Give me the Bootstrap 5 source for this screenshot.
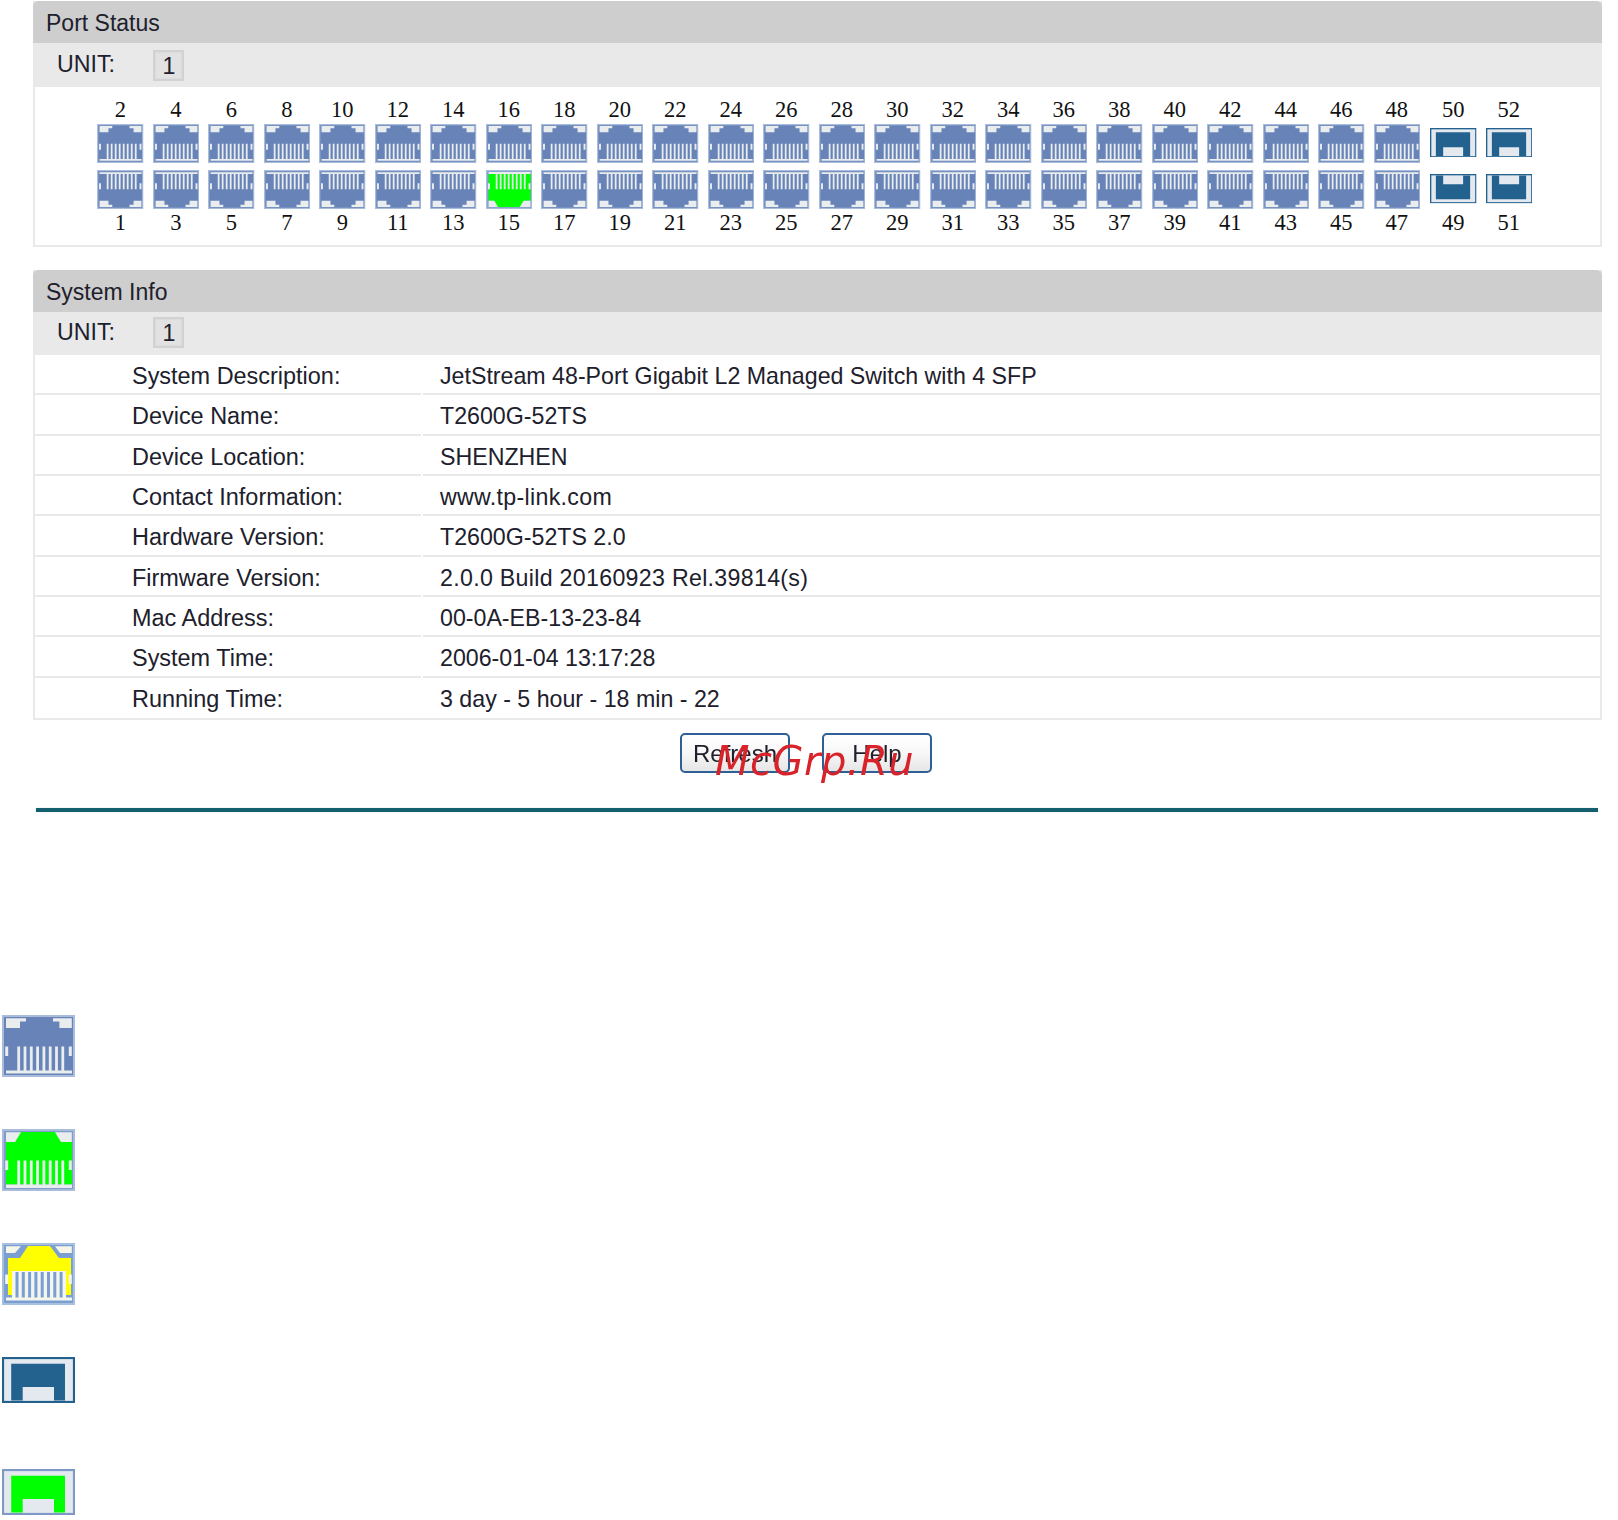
<!DOCTYPE html>
<html lang="en">
<head>
<meta charset="utf-8">
<title>Port Status</title>
<link href="https://cdn.jsdelivr.net/npm/bootstrap@5.3.0/dist/css/bootstrap.min.css" rel="stylesheet">
<style>
html,body{background:#fff;}
body{margin:0;padding-top:1px;font-family:"Liberation Sans",Arial,sans-serif;font-size:23.2px;color:#20202c;}
.sheet{filter:blur(.45px);}
.swpanel{margin-left:33px;width:1569px;border:2px solid #e9e9e9;border-top:0;border-radius:0;background:#fff;}
.swtitle{height:42px;line-height:45px;background:#cecece;margin:0 -2px;padding:0 0 0 13px;border:0;border-radius:0;font-size:23px;}
.swunit{height:44px;background:#e9e9e9;margin:0 -2px;padding-left:24px;}
.infopanel .swunit{height:46px;padding-bottom:2px;}
.swunit-label{width:96px;margin-top:-1px;}
.swunit-box{width:31px;height:31px;margin-top:1px;background:#e2e2e2;border:2px solid #d2d2d2;line-height:29px;text-align:center;box-shadow:inset 0 0 2px #cfcfcf;padding-left:1px;}
.portpanel{height:246px;margin-bottom:23px;}
.infopanel{height:450px;}
.ports{padding:10px 0 0 57.5px;}
.pcol{width:55.5px;flex:none;}
.pcol-gap{margin-left:1px;}
.pnum{font-family:"Liberation Serif","Times New Roman",serif;font-size:22.5px;line-height:26px;height:27px;color:#111;}
.pslot{height:39px;width:46.5px;}
.pslot+.pslot{margin-top:7px;}
.pslot svg{display:block;}
.pnum-low{height:26px;line-height:28px;}
.ico-rj{width:46.5px;height:39px;}
.ico-sfp{width:46.5px;height:29.5px;margin-top:-2px;}
.flipy{transform:scaleY(-1);}
.inforow{height:40.35px;line-height:41px;}
.inforow .kcell{width:386px;padding:1px 0 0 97px;margin-right:2px;border-bottom:2px solid #e9e9e9;height:100%;font-size:23.45px;}
.inforow .vcell{flex:1;padding:1px 0 0 17px;border-bottom:2px solid #e9e9e9;height:100%;}
.inforow .vwide{letter-spacing:.3px;}
.inforow:last-child .kcell,.inforow:last-child .vcell{border-bottom:0;}
.actions{margin-top:13px;height:40px;gap:32px;padding-left:680px;}
.swbtn{width:110px;height:40px;padding:2px 0 0;font-size:24px;line-height:34px;color:#20202c;border:2px solid #2e6096;border-radius:5px;background:linear-gradient(#fff,#f7f7f7 50%,#e6e6e6);}
.stamp{position:absolute;left:715px;top:736px;font-family:"DejaVu Sans",sans-serif;font-style:italic;font-size:40px;letter-spacing:.5px;line-height:50px;color:#d8232a;white-space:nowrap;}
.swrule{margin:35px 0 0 36px;width:1562px;height:4px;background:#135f6e;box-shadow:0 0 1px #8fb6bd;}
.legend{margin-top:203px;padding-left:2px;}
.legrow{height:114px;}
.legrow svg{display:block;margin-top:0;}
.legrow-last{height:46px;margin-top:-2px;}
.leg-rj{width:73px;height:62px;}
.leg-sfp{width:73px;height:46px;}
</style>
</head>
<body>
<svg width="0" height="0" class="position-absolute">
  <defs>
    <g id="rjmarks">
      <path fill="#e9edee" d="M4 3.2H24V6.6H18V13H4zM69.8 3.2H51V6.6H57.4V13H69.8z"/>
      <path fill="#e9edee" d="M3.2 31.5H6.2V41H3.2zM66.8 31.5H69.8V41H66.8z"/>
      <path fill="#e9edee" d="M15.3 31.5h2.8V56h-2.8zM21.6 31.5h2.8V56h-2.8zM27.9 31.5h2.8V56h-2.8zM34.2 31.5h2.8V56h-2.8zM40.5 31.5h2.8V56h-2.8zM46.8 31.5h2.8V56h-2.8zM53.1 31.5h2.8V56h-2.8zM59.4 31.5h2.8V56h-2.8z"/>
      <path fill="#e9edee" d="M4 55.6H70V58.4H4z"/>
    </g>
    <symbol id="rjblue" viewBox="0 0 73 62" preserveAspectRatio="none">
      <rect x="1" y="1" width="71" height="60" fill="#6783b8" stroke="#a9bcdc" stroke-width="2"/>
      <use href="#rjmarks"/>
    </symbol>
    <symbol id="rjgreen" viewBox="0 0 73 62" preserveAspectRatio="none">
      <rect x="1" y="1" width="71" height="60" fill="#7f9bc9" stroke="#a9bcdc" stroke-width="2"/>
      <path fill="#00ff00" d="M18 3H54L60 13H70V55.6H4V13H13z"/>
      <path fill="#e9edee" d="M4 3.2H19L13 13H4zM69.8 3.2H53L59 13H69.8z"/>
      <path fill="#e9edee" d="M3.2 31.5H6.2V41H3.2zM66.8 31.5H69.8V41H66.8z"/>
      <path fill="#e9edee" d="M15.3 31.5h2.8V56h-2.8zM21.6 31.5h2.8V56h-2.8zM27.9 31.5h2.8V56h-2.8zM34.2 31.5h2.8V56h-2.8zM40.5 31.5h2.8V56h-2.8zM46.8 31.5h2.8V56h-2.8zM53.1 31.5h2.8V56h-2.8zM59.4 31.5h2.8V56h-2.8z"/>
      <path fill="#e9edee" d="M4 55.6H70V59H4z"/>
    </symbol>
    <symbol id="rjyellow" viewBox="0 0 73 62" preserveAspectRatio="none">
      <rect x="1" y="1" width="71" height="60" fill="#7b9fd0" stroke="#a6c0e2" stroke-width="2"/>
      <path fill="#f5f5ea" d="M4 3.2H19L13 10H4zM69.8 3.2H53L58 10H69.8z"/>
      <path fill="#ffff00" d="M26 3H48L57 15H69V52H64V28H10V52H6V15H18z"/>
      <path fill="#f4f6ee" d="M10 28H64V55H10z"/>
      <path fill="#7b9fd0" d="M13.5 29h3V55h-3zM19.8 29h3V55h-3zM26.1 29h3V55h-3zM32.4 29h3V55h-3zM38.7 29h3V55h-3zM45 29h3V55h-3zM51.3 29h3V55h-3zM57.6 29h3V55h-3z"/>
      <path fill="#f4f6ee" d="M3.2 31.5H6.2V41H3.2zM66.8 31.5H69.8V41H66.8zM4 54.6H70V57.4H4z"/>
    </symbol>
    <symbol id="sfpblue" viewBox="0 0 73 46" preserveAspectRatio="none">
      <rect x="1" y="1" width="71" height="44" fill="#e4e9ef" stroke="#23628f" stroke-width="2.2"/>
      <path fill="#23628f" d="M9.2 6.8H63V43.5H52V30H20.7V43.5H9.2z"/>
    </symbol>
    <symbol id="sfpgreen" viewBox="0 0 73 46" preserveAspectRatio="none">
      <rect x="1" y="1" width="71" height="44" fill="#e4e9ef" stroke="#7e99c6" stroke-width="2.2"/>
      <path fill="#00ff00" d="M9.2 6.8H63V43.5H52V30H20.7V43.5H9.2z"/>
    </symbol>
  </defs>
</svg>

<div class="sheet">
  <section class="card swpanel portpanel">
    <div class="card-header swtitle">Port Status</div>
    <div class="swunit d-flex align-items-center"><span class="swunit-label">UNIT:</span><span class="swunit-box">1</span></div>
    <div class="ports d-flex">
      <div class="pcol d-flex flex-column align-items-center"><span class="pnum">2</span><div class="pslot"><svg class="ico-rj"><use href="#rjblue"/></svg></div><div class="pslot"><svg class="ico-rj flipy"><use href="#rjblue"/></svg></div><span class="pnum pnum-low">1</span></div>
      <div class="pcol d-flex flex-column align-items-center"><span class="pnum">4</span><div class="pslot"><svg class="ico-rj"><use href="#rjblue"/></svg></div><div class="pslot"><svg class="ico-rj flipy"><use href="#rjblue"/></svg></div><span class="pnum pnum-low">3</span></div>
      <div class="pcol d-flex flex-column align-items-center"><span class="pnum">6</span><div class="pslot"><svg class="ico-rj"><use href="#rjblue"/></svg></div><div class="pslot"><svg class="ico-rj flipy"><use href="#rjblue"/></svg></div><span class="pnum pnum-low">5</span></div>
      <div class="pcol d-flex flex-column align-items-center"><span class="pnum">8</span><div class="pslot"><svg class="ico-rj"><use href="#rjblue"/></svg></div><div class="pslot"><svg class="ico-rj flipy"><use href="#rjblue"/></svg></div><span class="pnum pnum-low">7</span></div>
      <div class="pcol d-flex flex-column align-items-center"><span class="pnum">10</span><div class="pslot"><svg class="ico-rj"><use href="#rjblue"/></svg></div><div class="pslot"><svg class="ico-rj flipy"><use href="#rjblue"/></svg></div><span class="pnum pnum-low">9</span></div>
      <div class="pcol d-flex flex-column align-items-center"><span class="pnum">12</span><div class="pslot"><svg class="ico-rj"><use href="#rjblue"/></svg></div><div class="pslot"><svg class="ico-rj flipy"><use href="#rjblue"/></svg></div><span class="pnum pnum-low">11</span></div>
      <div class="pcol d-flex flex-column align-items-center"><span class="pnum">14</span><div class="pslot"><svg class="ico-rj"><use href="#rjblue"/></svg></div><div class="pslot"><svg class="ico-rj flipy"><use href="#rjblue"/></svg></div><span class="pnum pnum-low">13</span></div>
      <div class="pcol d-flex flex-column align-items-center"><span class="pnum">16</span><div class="pslot"><svg class="ico-rj"><use href="#rjblue"/></svg></div><div class="pslot"><svg class="ico-rj flipy"><use href="#rjgreen"/></svg></div><span class="pnum pnum-low">15</span></div>
      <div class="pcol d-flex flex-column align-items-center"><span class="pnum">18</span><div class="pslot"><svg class="ico-rj"><use href="#rjblue"/></svg></div><div class="pslot"><svg class="ico-rj flipy"><use href="#rjblue"/></svg></div><span class="pnum pnum-low">17</span></div>
      <div class="pcol d-flex flex-column align-items-center"><span class="pnum">20</span><div class="pslot"><svg class="ico-rj"><use href="#rjblue"/></svg></div><div class="pslot"><svg class="ico-rj flipy"><use href="#rjblue"/></svg></div><span class="pnum pnum-low">19</span></div>
      <div class="pcol d-flex flex-column align-items-center"><span class="pnum">22</span><div class="pslot"><svg class="ico-rj"><use href="#rjblue"/></svg></div><div class="pslot"><svg class="ico-rj flipy"><use href="#rjblue"/></svg></div><span class="pnum pnum-low">21</span></div>
      <div class="pcol d-flex flex-column align-items-center"><span class="pnum">24</span><div class="pslot"><svg class="ico-rj"><use href="#rjblue"/></svg></div><div class="pslot"><svg class="ico-rj flipy"><use href="#rjblue"/></svg></div><span class="pnum pnum-low">23</span></div>
      <div class="pcol d-flex flex-column align-items-center"><span class="pnum">26</span><div class="pslot"><svg class="ico-rj"><use href="#rjblue"/></svg></div><div class="pslot"><svg class="ico-rj flipy"><use href="#rjblue"/></svg></div><span class="pnum pnum-low">25</span></div>
      <div class="pcol d-flex flex-column align-items-center"><span class="pnum">28</span><div class="pslot"><svg class="ico-rj"><use href="#rjblue"/></svg></div><div class="pslot"><svg class="ico-rj flipy"><use href="#rjblue"/></svg></div><span class="pnum pnum-low">27</span></div>
      <div class="pcol d-flex flex-column align-items-center"><span class="pnum">30</span><div class="pslot"><svg class="ico-rj"><use href="#rjblue"/></svg></div><div class="pslot"><svg class="ico-rj flipy"><use href="#rjblue"/></svg></div><span class="pnum pnum-low">29</span></div>
      <div class="pcol d-flex flex-column align-items-center"><span class="pnum">32</span><div class="pslot"><svg class="ico-rj"><use href="#rjblue"/></svg></div><div class="pslot"><svg class="ico-rj flipy"><use href="#rjblue"/></svg></div><span class="pnum pnum-low">31</span></div>
      <div class="pcol d-flex flex-column align-items-center"><span class="pnum">34</span><div class="pslot"><svg class="ico-rj"><use href="#rjblue"/></svg></div><div class="pslot"><svg class="ico-rj flipy"><use href="#rjblue"/></svg></div><span class="pnum pnum-low">33</span></div>
      <div class="pcol d-flex flex-column align-items-center"><span class="pnum">36</span><div class="pslot"><svg class="ico-rj"><use href="#rjblue"/></svg></div><div class="pslot"><svg class="ico-rj flipy"><use href="#rjblue"/></svg></div><span class="pnum pnum-low">35</span></div>
      <div class="pcol d-flex flex-column align-items-center"><span class="pnum">38</span><div class="pslot"><svg class="ico-rj"><use href="#rjblue"/></svg></div><div class="pslot"><svg class="ico-rj flipy"><use href="#rjblue"/></svg></div><span class="pnum pnum-low">37</span></div>
      <div class="pcol d-flex flex-column align-items-center"><span class="pnum">40</span><div class="pslot"><svg class="ico-rj"><use href="#rjblue"/></svg></div><div class="pslot"><svg class="ico-rj flipy"><use href="#rjblue"/></svg></div><span class="pnum pnum-low">39</span></div>
      <div class="pcol d-flex flex-column align-items-center"><span class="pnum">42</span><div class="pslot"><svg class="ico-rj"><use href="#rjblue"/></svg></div><div class="pslot"><svg class="ico-rj flipy"><use href="#rjblue"/></svg></div><span class="pnum pnum-low">41</span></div>
      <div class="pcol d-flex flex-column align-items-center"><span class="pnum">44</span><div class="pslot"><svg class="ico-rj"><use href="#rjblue"/></svg></div><div class="pslot"><svg class="ico-rj flipy"><use href="#rjblue"/></svg></div><span class="pnum pnum-low">43</span></div>
      <div class="pcol d-flex flex-column align-items-center"><span class="pnum">46</span><div class="pslot"><svg class="ico-rj"><use href="#rjblue"/></svg></div><div class="pslot"><svg class="ico-rj flipy"><use href="#rjblue"/></svg></div><span class="pnum pnum-low">45</span></div>
      <div class="pcol d-flex flex-column align-items-center"><span class="pnum">48</span><div class="pslot"><svg class="ico-rj"><use href="#rjblue"/></svg></div><div class="pslot"><svg class="ico-rj flipy"><use href="#rjblue"/></svg></div><span class="pnum pnum-low">47</span></div>
      <div class="pcol pcol-gap d-flex flex-column align-items-center"><span class="pnum">50</span><div class="pslot d-flex align-items-center"><svg class="ico-sfp"><use href="#sfpblue"/></svg></div><div class="pslot d-flex align-items-center"><svg class="ico-sfp flipy"><use href="#sfpblue"/></svg></div><span class="pnum pnum-low">49</span></div>
      <div class="pcol d-flex flex-column align-items-center"><span class="pnum">52</span><div class="pslot d-flex align-items-center"><svg class="ico-sfp"><use href="#sfpblue"/></svg></div><div class="pslot d-flex align-items-center"><svg class="ico-sfp flipy"><use href="#sfpblue"/></svg></div><span class="pnum pnum-low">51</span></div>
    </div>
  </section>

  <section class="card swpanel infopanel">
    <div class="card-header swtitle">System Info</div>
    <div class="swunit d-flex align-items-center"><span class="swunit-label">UNIT:</span><span class="swunit-box">1</span></div>
    <div>
      <div class="inforow d-flex"><div class="kcell">System Description:</div><div class="vcell">JetStream 48-Port Gigabit L2 Managed Switch with 4 SFP</div></div>
      <div class="inforow d-flex"><div class="kcell">Device Name:</div><div class="vcell">T2600G-52TS</div></div>
      <div class="inforow d-flex"><div class="kcell">Device Location:</div><div class="vcell">SHENZHEN</div></div>
      <div class="inforow d-flex"><div class="kcell">Contact Information:</div><div class="vcell vwide">www.tp-link.com</div></div>
      <div class="inforow d-flex"><div class="kcell">Hardware Version:</div><div class="vcell">T2600G-52TS 2.0</div></div>
      <div class="inforow d-flex"><div class="kcell">Firmware Version:</div><div class="vcell vwide">2.0.0 Build 20160923 Rel.39814(s)</div></div>
      <div class="inforow d-flex"><div class="kcell">Mac Address:</div><div class="vcell">00-0A-EB-13-23-84</div></div>
      <div class="inforow d-flex"><div class="kcell">System Time:</div><div class="vcell">2006-01-04 13:17:28</div></div>
      <div class="inforow d-flex"><div class="kcell">Running Time:</div><div class="vcell">3 day - 5 hour - 18 min - 22</div></div>
    </div>
  </section>

  <div class="actions d-flex">
    <button type="button" class="btn swbtn">Refresh</button>
    <button type="button" class="btn swbtn">Help</button>
  </div>
  <div class="swrule"></div>

  <div class="legend">
    <div class="legrow"><svg class="leg-rj"><use href="#rjblue"/></svg></div>
    <div class="legrow"><svg class="leg-rj"><use href="#rjgreen"/></svg></div>
    <div class="legrow"><svg class="leg-rj"><use href="#rjyellow"/></svg></div>
    <div class="legrow"><svg class="leg-sfp"><use href="#sfpblue"/></svg></div>
    <div class="legrow legrow-last"><svg class="leg-sfp"><use href="#sfpgreen"/></svg></div>
  </div>
</div>
<div class="stamp">McGrp.Ru</div>
<script src="https://cdn.jsdelivr.net/npm/bootstrap@5.3.0/dist/js/bootstrap.bundle.min.js"></script>
</body>
</html>
